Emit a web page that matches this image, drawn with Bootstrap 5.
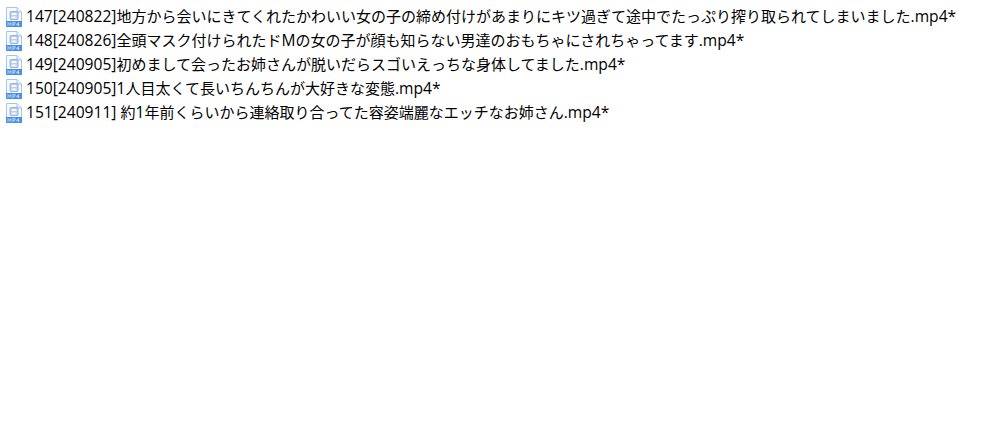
<!DOCTYPE html>
<html lang="ja">
<head>
<meta charset="utf-8">
<title>files</title>
<link href="https://cdn.jsdelivr.net/npm/bootstrap@5.3.0/dist/css/bootstrap.min.css" rel="stylesheet">
<style>
body{background:#fff;color:#000;font-family:"Open Sans","Noto Sans CJK JP",sans-serif;font-size:15px;overflow:hidden}
.file-list{padding:5px 0 0 6px;margin:0;list-style:none}
.file-row{height:24px;line-height:24px;white-space:nowrap;gap:4px}
.file-ico{width:16px;height:20px;flex:none}
.file-name{padding-bottom:2px}
.lat{font-size:15.6px}
</style>
</head>
<body>
<svg width="0" height="0" class="d-block">
<defs>
<symbol id="mp4ico" viewBox="0 0 16 20">
<path d="M.5.5H11L15.500 5V19.500H.5Z" fill="#f7faff" stroke="#a5c6f2"/>
<path d="M11 .5V5H15.500" fill="#e3eefc" stroke="#a5c6f2"/>
<rect x="4" y="4.500" width="8" height="8" rx="1" fill="#b9cde8" stroke="#8fa8cc" stroke-width=".8"/>
<rect x="5.500" y="6" width="5" height="2" fill="#f7faff"/>
<rect x="5.500" y="9.500" width="5" height="2" fill="#f7faff"/>
<rect x="0" y="14" width="16" height="6" fill="#4a90e6"/>
<path d="M2 19V15.500L3.500 17.500L5 15.500V19M7 19V15.500H9V17.300H7M12.500 19V15.500L10.500 17.800H13.500" fill="none" stroke="#dcebfd" stroke-width=".7"/>
</symbol>
</defs>
</svg>
<ul class="file-list">
<li class="file-row d-flex align-items-center"><svg class="file-ico"><use href="#mp4ico"/></svg><span class="file-name"><span class="lat">147[240822]</span>地方から会いにきてくれたかわいい女の子の締め付けがあまりにキツ過ぎて途中でたっぷり搾り取られてしまいました<span class="lat">.mp4*</span></span></li>
<li class="file-row d-flex align-items-center"><svg class="file-ico"><use href="#mp4ico"/></svg><span class="file-name"><span class="lat">148[240826]</span>全頭マスク付けられたド<span class="lat">M</span>の女の子が顔も知らない男達のおもちゃにされちゃってます<span class="lat">.mp4*</span></span></li>
<li class="file-row d-flex align-items-center"><svg class="file-ico"><use href="#mp4ico"/></svg><span class="file-name"><span class="lat">149[240905]</span>初めまして会ったお姉さんが脱いだらスゴいえっちな身体してました<span class="lat">.mp4*</span></span></li>
<li class="file-row d-flex align-items-center"><svg class="file-ico"><use href="#mp4ico"/></svg><span class="file-name"><span class="lat">150[240905]1</span>人目太くて長いちんちんが大好きな変態<span class="lat">.mp4*</span></span></li>
<li class="file-row d-flex align-items-center"><svg class="file-ico"><use href="#mp4ico"/></svg><span class="file-name"><span class="lat">151[240911] </span>約<span class="lat">1</span>年前くらいから連絡取り合ってた容姿端麗なエッチなお姉さん<span class="lat">.mp4*</span></span></li>
</ul>
<script src="https://cdn.jsdelivr.net/npm/bootstrap@5.3.0/dist/js/bootstrap.bundle.min.js"></script>
</body>
</html>
